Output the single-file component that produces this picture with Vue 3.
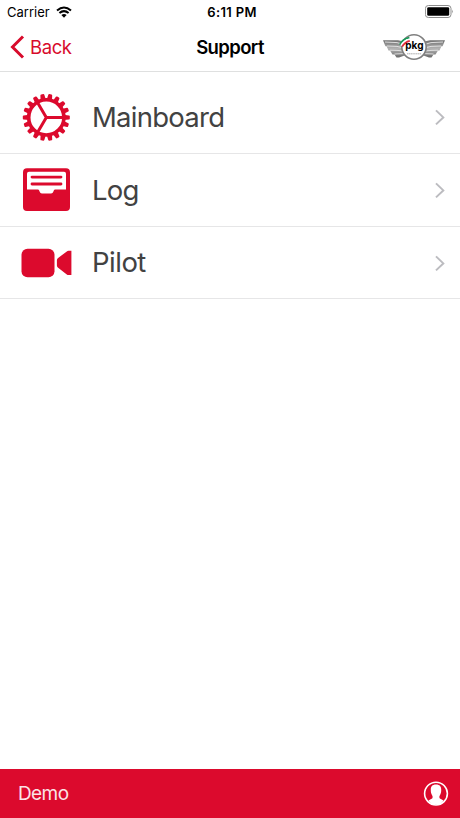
<template>
  <div class="screen">
    <div class="status-bar">
      <div class="carrier">
        <span class="carrier-name">Carrier</span>
        <svg class="wifi" width="16" height="12" viewBox="0 0 16 12">
          <path d="M1 4.6Q8 -1.6 15 4.6" />
          <path d="M3.4 7.1Q8 3.1 12.6 7.1" />
          <path class="wifi-dot" d="M5.4 9.1Q8 6.8 10.6 9.1L8 11.8Z" />
        </svg>
      </div>
      <span class="time">6:11 PM</span>
      <svg class="battery" width="30" height="14" viewBox="0 0 30 14">
        <rect x="0.4" y="0.5" width="25.6" height="12" rx="3" fill="#fff" stroke="#8c8c8c" />
        <rect x="2.2" y="2.2" width="22" height="8.6" rx="1.4" fill="#000" />
        <path d="M27.2 4.6Q28.8 6.5 27.2 8.4Z" fill="#8c8c8c" />
      </svg>
    </div>

    <header class="nav-bar">
      <button class="back">
        <svg width="15" height="24" viewBox="0 0 15 24">
          <path d="M13 1.5L2.5 12L13 22.5" />
        </svg>
        <span>Back</span>
      </button>
      <h1 class="title">Support</h1>
      <svg class="logo" width="64" height="28" viewBox="0 0 64 28">
        <defs>
          <linearGradient id="wing" x1="0" y1="0" x2="0" y2="1">
            <stop offset="0" stop-color="#707070" />
            <stop offset="0.5" stop-color="#b4b4b4" />
            <stop offset="1" stop-color="#6a6a6a" />
          </linearGradient>
        </defs>
        <g v-for="side in ['', 'translate(64 0) scale(-1 1)']" :key="side" :transform="side">
          <path d="M1 7.2H16L24 9V22L17 24.4H14.5L12.5 21.4H10.5L8 17.6H6.5L4.6 13.2H3.4Z" fill="url(#wing)" />
          <path d="M3 9L15 9.6L22 11.6M5 13L15 13.4L22 15M8 17.2L15 17.4L22 18M12.5 21L22 20.6" class="feather" />
        </g>
        <circle cx="32" cy="14" r="12.2" fill="#fff" stroke="#808080" stroke-width="1.6" />
        <path d="M17.8 11.6Q20.5 5.8 27.4 4.6" stroke="#159957" class="stripe" />
        <path d="M19 12.6Q21.8 7.4 27.6 6.3" stroke="#fff" class="stripe" />
        <path d="M20.2 13.6Q22.6 9 27.8 7.8" stroke="#e3283a" class="stripe" />
        <text x="32.4" y="16.4" text-anchor="middle" class="logo-text">pkg</text>
        <path d="M25 20.8H39.5" stroke="#999" stroke-width="0.8" stroke-dasharray="1.4 0.4" />
      </svg>
    </header>

    <main class="menu">
      <div v-for="item in items" :key="item.id" class="menu-item">
        <svg class="menu-icon" width="52" height="52" viewBox="0 0 52 52">
          <g v-if="item.id === 'mainboard'">
            <circle cx="26.3" cy="26.4" r="17.6" class="gear-line" />
            <path d="M26.3 26.4H43M26.3 26.4L17.5 11.4M26.3 26.4L17.5 41.4" class="gear-line spoke" />
            <path
              v-for="n in teeth"
              :key="n"
              d="M43.5 23.7L49 24.4Q49.8 24.6 49.8 25.4V27.4Q49.8 28.2 49 28.4L43.5 29.1Z"
              :transform="`rotate(${n * 360 / teeth} 26.3 26.4)`"
            />
          </g>
          <g v-else-if="item.id === 'log'">
            <path
              fill-rule="evenodd"
              d="M7 4.3H46Q50 4.3 50 8.3V43.1Q50 47.1 46 47.1H7Q3 47.1 3 43.1V8.3Q3 4.3 7 4.3ZM9 7.8Q7 7.8 7 9.8V25.4H17.7Q18.9 25.4 19.3 26.8L19.7 27.8Q20.2 29.4 21.9 29.4H31.1Q32.8 29.4 33.3 27.8L33.7 26.8Q34.1 25.4 35.3 25.4H46V9.8Q46 7.8 44 7.8Z"
            />
            <path d="M12 13.1H41M12 20H41" class="log-line" />
          </g>
          <g v-else>
            <rect x="1.5" y="11.7" width="33" height="28.6" rx="6" />
            <path d="M36.9 23.2Q36.9 22 37.8 21.2L46.8 14.4Q47.5 13.8 48.5 13.8H51.4V38H48.5Q47.5 38 46.8 37.4L37.8 30.6Q36.9 29.8 36.9 28.6Z" />
          </g>
        </svg>
        <span class="menu-label">{{ item.label }}</span>
        <svg class="chevron" width="12" height="18" viewBox="0 0 12 18">
          <path d="M2 2.4L9.3 9.4L2 16.4" />
        </svg>
      </div>
    </main>

    <footer class="footer">
      <span class="user">Demo</span>
      <svg width="26" height="26" viewBox="0 0 26 26">
        <circle cx="13" cy="12.6" r="11.4" fill="none" stroke="#fff" stroke-width="1.6" />
        <path
          fill="#fff"
          d="M13 3.4C16.8 3.4 18.4 5.6 18.2 8.8C18.2 10.6 18.1 12 17.3 13.4C16.5 14.8 16.3 15.2 16.4 16.4C16.5 18 18.8 18 20.6 19.4Q18 23.6 13 23.6Q8 23.6 5.4 19.4C7.2 18 9.5 18 9.6 16.4C9.7 15.2 9.5 14.8 8.7 13.4C7.9 12 7.8 10.6 7.8 8.8C7.6 5.6 9.2 3.4 13 3.4Z"
        />
      </svg>
    </footer>
  </div>
</template>

<script setup>
const teeth = 18;

const items = [
  { id: 'mainboard', label: 'Mainboard' },
  { id: 'log', label: 'Log' },
  { id: 'pilot', label: 'Pilot' },
];
</script>

<style>
body {
  margin: 0;
}
</style>

<style scoped>
.screen {
  display: flex;
  flex-direction: column;
  height: 100vh;
  background: #fff;
  font-family: Inter, "Liberation Sans", sans-serif;
  color: #000;
}

/* Status bar */
.status-bar {
  display: grid;
  grid-template-columns: 1fr auto 1fr;
  align-items: center;
  height: 24px;
  padding: 0 5px 0 7px;
  font-size: 13px;
  line-height: 24px;
}

.carrier {
  display: flex;
  align-items: center;
  gap: 6px;
}

.wifi {
  fill: none;
  stroke: #000;
  stroke-width: 2;
}

.wifi-dot {
  fill: #000;
  stroke: none;
}

.time {
  margin-left: 2px;
  font-weight: 600;
  letter-spacing: 0.35px;
}

.battery {
  justify-self: end;
  margin-bottom: 1px;
}

/* Navigation bar */
.nav-bar {
  display: grid;
  grid-template-columns: 1fr auto 1fr;
  align-items: center;
  height: 46px;
  padding: 0 14px 1px 10px;
  border-bottom: 1px solid #dfe0e0;
}

.back {
  display: flex;
  align-items: center;
  gap: 5px;
  padding: 0;
  border: none;
  background: none;
  font-family: inherit;
  font-size: 18.5px;
  letter-spacing: -0.4px;
  color: #d80b2c;
}

.back path {
  fill: none;
  stroke: #d80b2c;
  stroke-width: 3;
}

.title {
  margin: 0 0 0 4px;
  font-size: 18.5px;
  font-weight: 600;
  letter-spacing: -0.6px;
}

.logo {
  justify-self: end;
}

.feather {
  fill: none;
  stroke: #e8e8e8;
  stroke-width: 0.9;
}

.stripe {
  fill: none;
  stroke-width: 1.7;
}

.logo-text {
  font-size: 10px;
  font-weight: 700;
}

/* Menu */
.menu {
  flex: 1;
  padding-top: 9px;
}

.menu-item {
  display: flex;
  align-items: center;
  box-sizing: border-box;
  height: 73px;
  padding: 0 14px 0 20px;
  border-bottom: 1px solid #e6e6e7;
}

.menu-item:last-child {
  height: 72px;
}

.menu-icon {
  fill: #dc0a2d;
}

.gear-line {
  fill: none;
  stroke: #dc0a2d;
  stroke-width: 3.6;
}

.spoke {
  stroke-width: 3;
}

.log-line {
  fill: none;
  stroke: #dc0a2d;
  stroke-width: 2.8;
  stroke-linecap: round;
}

.menu-label {
  flex: 1;
  margin-left: 20px;
  font-size: 27.5px;
  letter-spacing: -0.75px;
  color: #424242;
}

.menu-item:last-child .menu-label {
  margin-bottom: 1px;
  letter-spacing: -0.5px;
}

.chevron path {
  fill: none;
  stroke: #bcbcc0;
  stroke-width: 2;
}

/* Footer */
.footer {
  display: flex;
  align-items: center;
  justify-content: space-between;
  height: 49px;
  padding: 0 11px 0 18px;
  background: #dc0a2d;
}

.user {
  font-size: 19px;
  letter-spacing: -0.6px;
  color: #fbe3e6;
}
</style>
